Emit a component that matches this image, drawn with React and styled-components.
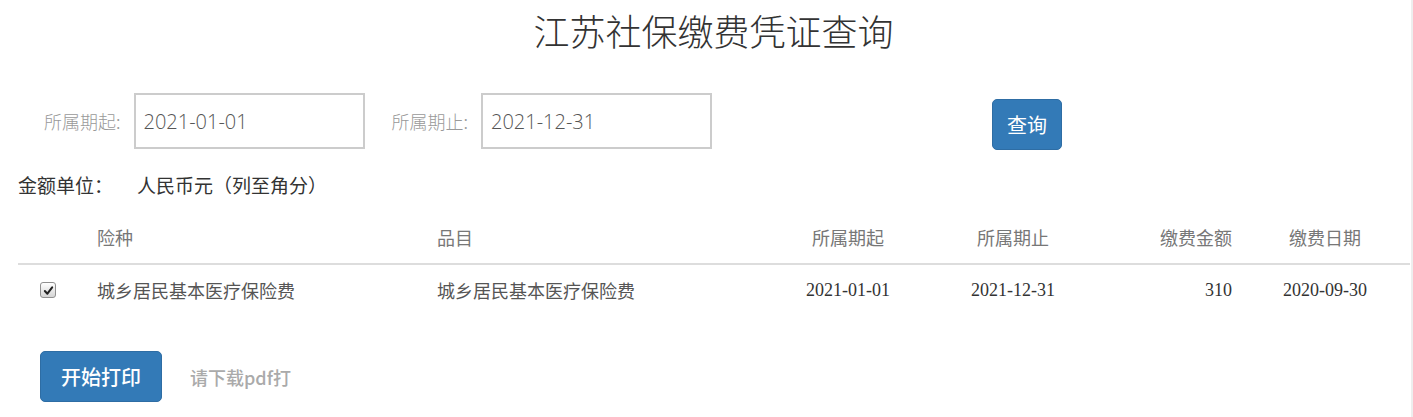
import React from "react";
import styled, { createGlobalStyle } from "styled-components";

const GlobalStyle = createGlobalStyle`
  html, body {
    margin: 0;
    padding: 0;
    background: #ffffff;
  }
  body {
    font-family: "Open Sans", "Noto Sans CJK SC", sans-serif;
    color: #333333;
  }
`;

const Page = styled.div`
  box-sizing: border-box;
  width: 100%;
  min-height: 417px;
  border-right: 2px solid #eeeeee;
  padding-bottom: 16px;
`;

const Title = styled.h1`
  margin: 0;
  padding: 5px 0 0 16px;
  height: 50px;
  line-height: 50px;
  text-align: center;
  font-family: "Noto Sans CJK SC", sans-serif;
  font-size: 36px;
  font-weight: 300;
  color: #333333;
`;

const FilterRow = styled.div`
  display: flex;
  align-items: center;
  margin-top: 38px;
  padding-left: 44px;
`;

const Field = styled.div`
  display: flex;
  align-items: center;
  gap: 13px;
  margin-right: ${(p) => p.$space || 0}px;
`;

const Label = styled.span`
  font-family: "Noto Sans CJK SC", sans-serif;
  font-size: 18px;
  font-weight: 300;
  color: #999999;
  white-space: nowrap;
`;

const DateInput = styled.input`
  box-sizing: border-box;
  width: 231px;
  height: 56px;
  border: 2px solid #cccccc;
  padding: 0 8px;
  font-family: "Open Sans", sans-serif;
  font-size: 20px;
  font-weight: 300;
  color: #555555;
  outline: none;
  background: #ffffff;
`;

const Button = styled.button`
  box-sizing: border-box;
  height: 51px;
  padding: 0 ${(p) => p.$pad || 17}px;
  background: #337ab7;
  border: 1px solid #2e6da4;
  border-radius: 5px;
  color: #ffffff;
  font-family: "Noto Sans CJK SC", sans-serif;
  font-size: ${(p) => p.$size || 20}px;
  font-weight: ${(p) => p.$weight || 400};
  cursor: pointer;
`;

const SearchButton = styled(Button)`
  align-self: flex-end;
  margin-bottom: -1px;
  margin-left: 280px;
`;

const UnitLine = styled.div`
  margin-top: 24px;
  padding-left: 18px;
  font-family: "Noto Sans CJK SC", sans-serif;
  font-size: 19px;
  line-height: 24px;
  color: #333333;
`;

const UnitValue = styled.span`
  margin-left: 24px;
`;

const Table = styled.div`
  margin: 14px 0 0 18px;
  width: 1392px;
  font-family: "Liberation Serif", "Noto Sans CJK SC", serif;
  font-size: 18px;
`;

const Row = styled.div`
  display: grid;
  grid-template-columns: 71px 340px 349px 140px 190px 132px 170px;
  align-items: center;
  height: ${(p) => (p.$head ? 52 : 50)}px;
  border-bottom: ${(p) => (p.$head ? "2px solid #dddddd" : "none")};
  color: ${(p) => (p.$head ? "#777777" : "#333333")};
`;

const Cell = styled.div`
  box-sizing: border-box;
  padding: 0 8px;
  text-align: ${(p) => p.$align || "left"};
  color: ${(p) => (p.$muted ? "#555555" : "inherit")};
  white-space: nowrap;
`;

const CheckCell = styled.div`
  padding-left: 22px;
  display: flex;
  align-items: center;
`;

const CheckBox = styled.span`
  box-sizing: border-box;
  width: 16px;
  height: 16px;
  border: 1px solid #8f8f8f;
  border-radius: 3px;
  background: linear-gradient(#ffffff, #d4d4d4);
  display: inline-flex;
  align-items: center;
  justify-content: center;
`;

const Footer = styled.div`
  display: flex;
  align-items: center;
  gap: 28px;
  margin-top: 36px;
  padding-left: 40px;
`;

const Hint = styled.span`
  font-family: "Noto Sans CJK SC", sans-serif;
  font-size: 18px;
  font-weight: 500;
  color: #aaaaaa;
`;

const columns = [
  { key: "type", title: "险种", align: "left", muted: true },
  { key: "item", title: "品目", align: "left", muted: true },
  { key: "start", title: "所属期起", align: "center" },
  { key: "end", title: "所属期止", align: "center" },
  { key: "amount", title: "缴费金额", align: "right" },
  { key: "date", title: "缴费日期", align: "center" },
];

const rows = [
  {
    type: "城乡居民基本医疗保险费",
    item: "城乡居民基本医疗保险费",
    start: "2021-01-01",
    end: "2021-12-31",
    amount: "310",
    date: "2020-09-30",
  },
];

function App() {
  return (
    <Page>
      <GlobalStyle />
      <Title>江苏社保缴费凭证查询</Title>
      <FilterRow>
        <Field $space={27}>
          <Label>所属期起:</Label>
          <DateInput defaultValue="2021-01-01" />
        </Field>
        <Field>
          <Label>所属期止:</Label>
          <DateInput defaultValue="2021-12-31" />
        </Field>
        <SearchButton $pad={14}>查询</SearchButton>
      </FilterRow>
      <UnitLine>
        金额单位：<UnitValue>人民币元（列至角分）</UnitValue>
      </UnitLine>
      <Table>
        <Row $head>
          <Cell />
          {columns.map((c) => (
            <Cell key={c.key} $align={c.align}>{c.title}</Cell>
          ))}
        </Row>
        {rows.map((r, i) => (
          <Row key={i}>
            <CheckCell>
              <CheckBox>
                <svg width="11" height="11" viewBox="0 0 12 12">
                  <path d="M2 6.5 L4.8 9.5 L10 2.5" fill="none" stroke="#222" strokeWidth="2.2" strokeLinecap="round" strokeLinejoin="round" />
                </svg>
              </CheckBox>
            </CheckCell>
            {columns.map((c) => (
              <Cell key={c.key} $align={c.align} $muted={c.muted}>{r[c.key]}</Cell>
            ))}
          </Row>
        ))}
      </Table>
      <Footer>
        <Button $pad={20} $weight={500}>开始打印</Button>
        <Hint>请下载pdf打</Hint>
      </Footer>
    </Page>
  );
}

export default App;
